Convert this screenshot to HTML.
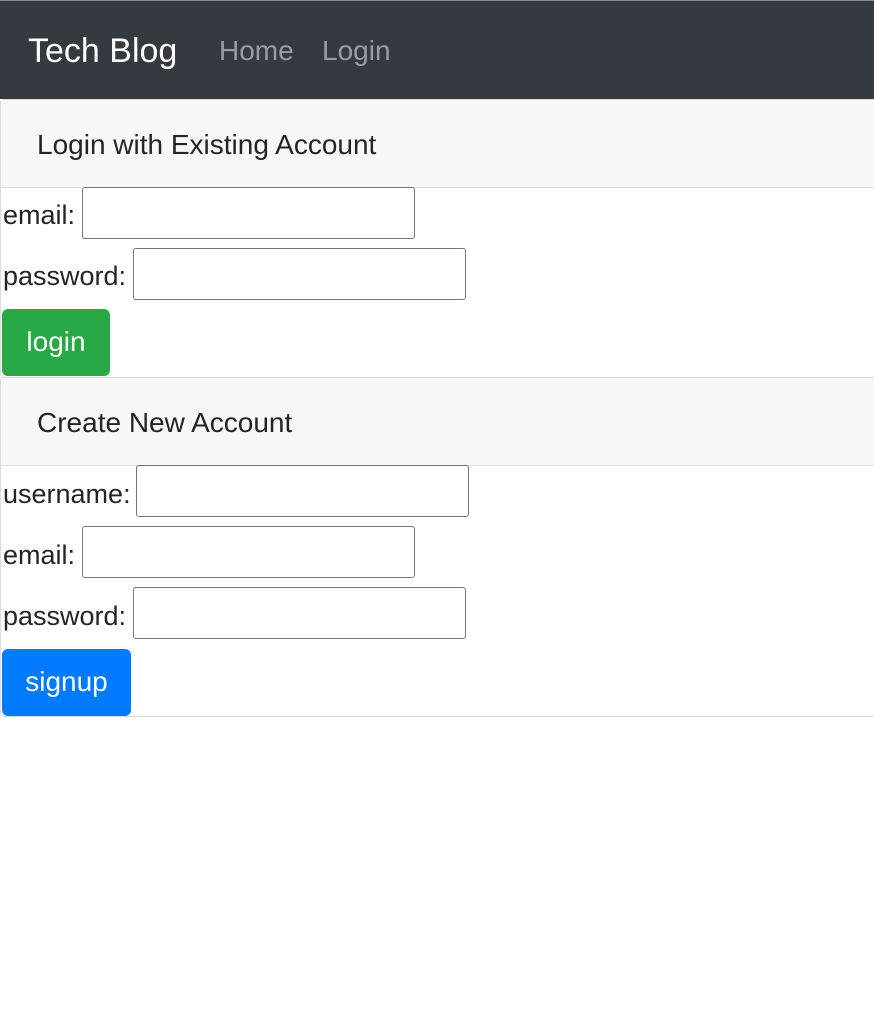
<!DOCTYPE html>
<html><head><style>
*{box-sizing:border-box;margin:0;padding:0}
body{width:874px;height:1030px;background:#fff;font-family:"Liberation Sans",sans-serif;color:#212529;position:relative;overflow:hidden}
.abs{position:absolute;white-space:nowrap}
.nav{left:0;top:0;width:874px;height:99px;background:#343a40;border-top:1px solid #8a8d91}
.card{left:0;width:876px;border:1px solid #dcdcdc;border-radius:4px}
.hdr{left:1px;width:874px;height:88px;background:#f7f7f7;border-bottom:1px solid #dcdcdc}
.inp{height:52px;width:333px;border:1px solid #767676;border-radius:3px;background:#fff}
.lbl{font-size:27px;line-height:30px}
.btn{color:#fff;font-size:28px;border-radius:6px;text-align:center;line-height:66px;height:67px}
</style></head><body>
<div class="abs nav"></div>
<div class="abs" style="left:28px;top:31px;color:#fff;font-size:34px;line-height:40px">Tech Blog</div>
<div class="abs" style="left:219px;top:36px;color:#9a9da0;font-size:28px;line-height:30px">Home</div>
<div class="abs" style="left:322px;top:36px;color:#9a9da0;font-size:28px;line-height:30px">Login</div>

<div class="abs card" style="top:99px;height:279px"></div>
<div class="abs hdr" style="top:100px"></div>
<div class="abs lbl" style="left:37px;top:130px;font-size:28px">Login with Existing Account</div>
<div class="abs lbl" style="left:3px;top:200px">email:</div>
<div class="abs inp" style="left:82px;top:187px"></div>
<div class="abs lbl" style="left:3px;top:261px">password:</div>
<div class="abs inp" style="left:133px;top:248px"></div>
<div class="abs btn" style="left:2px;top:309px;width:108px;background:#28a745">login</div>

<div class="abs card" style="top:377px;height:340px"></div>
<div class="abs hdr" style="top:378px"></div>
<div class="abs lbl" style="left:37px;top:408px;font-size:28px">Create New Account</div>
<div class="abs lbl" style="left:3px;top:479px">username:</div>
<div class="abs inp" style="left:136px;top:465px"></div>
<div class="abs lbl" style="left:3px;top:540px">email:</div>
<div class="abs inp" style="left:82px;top:526px"></div>
<div class="abs lbl" style="left:3px;top:601px">password:</div>
<div class="abs inp" style="left:133px;top:587px"></div>
<div class="abs btn" style="left:2px;top:649px;width:129px;background:#007bff">signup</div>
</body></html>
